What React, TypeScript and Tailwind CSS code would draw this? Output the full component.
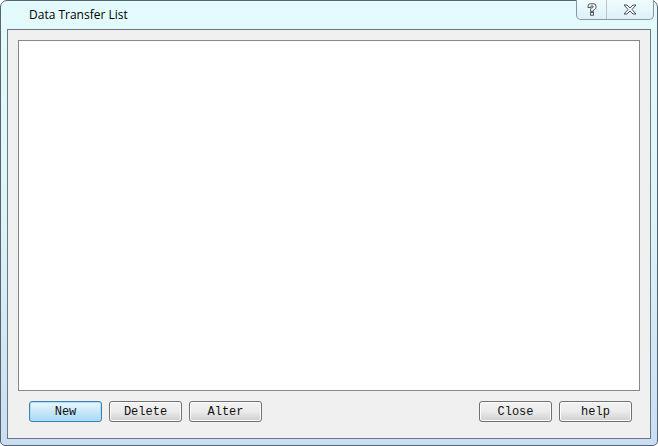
import React from "react";

const WinButton = ({ label, primary }: { label: string; primary?: boolean }) => (
  <button
    className={
      primary
        ? "w-[73px] h-[21px] rounded-[3px] border border-[#3c7fb1] bg-gradient-to-b from-[#eaf6fd] to-[#a7d9f5] shadow-[inset_0_0_0_1px_#a6e2fb] text-[12px] leading-none text-[#111] font-normal"
        : "w-[73px] h-[21px] rounded-[3px] border border-[#707070] bg-gradient-to-b from-[#f2f2f2] via-[#ebebeb] to-[#cfcfcf] shadow-[inset_0_0_0_1px_#fcfcfc] text-[12px] leading-none text-[#111] font-normal"
    }
    style={{ fontFamily: '"Liberation Mono", monospace' }}
  >
    {label}
  </button>
);

const App = () => {
  return (
    <div className="w-[658px] h-[446px] bg-white">
      <div className="w-[658px] h-[446px] flex flex-col rounded-t-[7px] rounded-b-[5px] border border-[#5a6470] bg-gradient-to-b from-[#e4fbfd] via-[#dcf3f8] to-[#c9def3] px-[6px] pb-[6px]">
        <div className="h-[28px] flex items-start justify-between shrink-0">
          <div
            className="pl-[22px] pt-[5px] text-[12px] text-black"
            style={{ fontFamily: '"Open Sans", "Noto Sans", sans-serif' }}
          >
            Data Transfer List
          </div>
          <div className="flex -mt-[1px] mr-[-3px] h-[20px] border border-t-0 border-[#8a97a3] rounded-b-[5px] bg-gradient-to-b from-[#f0fcfe] to-[#dcf1f7]">
            <div className="w-[30px] flex items-center justify-center border-r border-[#b7c4ce]">
              <svg width="10" height="13" viewBox="0 0 10 13">
                <path
                  d="M1 4.5 V3 Q1 0.8 3.2 0.8 H6.8 Q9 0.8 9 3 V4.5 Q9 5.8 7.6 6.5 L6.4 7.1 V8.4 H3.6 V6.2 Q3.6 5.4 4.6 5 L5.8 4.5 Q6.2 4.3 6.2 3.9 V3.4 Q6.2 3 5.8 3 H4.2 Q3.8 3 3.8 3.4 V4.5 Z"
                  fill="#f7f9fa"
                  stroke="#3a4048"
                  strokeWidth="0.9"
                  strokeLinejoin="round"
                />
                <rect x="3.6" y="9.4" width="2.8" height="2.8" fill="#f7f9fa" stroke="#3a4048" strokeWidth="0.9" />
              </svg>
            </div>
            <div className="w-[46px] flex items-center justify-center">
              <svg width="14" height="11" viewBox="0 0 14 11">
                <path
                  d="M1 1 H4 L7 4 L10 1 H13 L9 5.5 L13 10 H10 L7 7 L4 10 H1 L5 5.5 Z"
                  fill="#f7f9fa"
                  stroke="#3a4048"
                  strokeWidth="0.9"
                  strokeLinejoin="round"
                />
              </svg>
            </div>
          </div>
        </div>
        <div className="flex-1 flex flex-col border border-[#6e7780] bg-[#f0f0f0] p-[10px] pb-[16px]">
          <div className="flex-1 border border-[#828790] bg-white"></div>
          <div className="flex justify-between pt-[10px] pl-[11px] pr-[8px]">
            <div className="flex gap-[7px]">
              <WinButton label="New" primary />
              <WinButton label="Delete" />
              <WinButton label="Alter" />
            </div>
            <div className="flex gap-[7px]">
              <WinButton label="Close" />
              <WinButton label="help" />
            </div>
          </div>
        </div>
      </div>
    </div>
  );
};

export default App;
